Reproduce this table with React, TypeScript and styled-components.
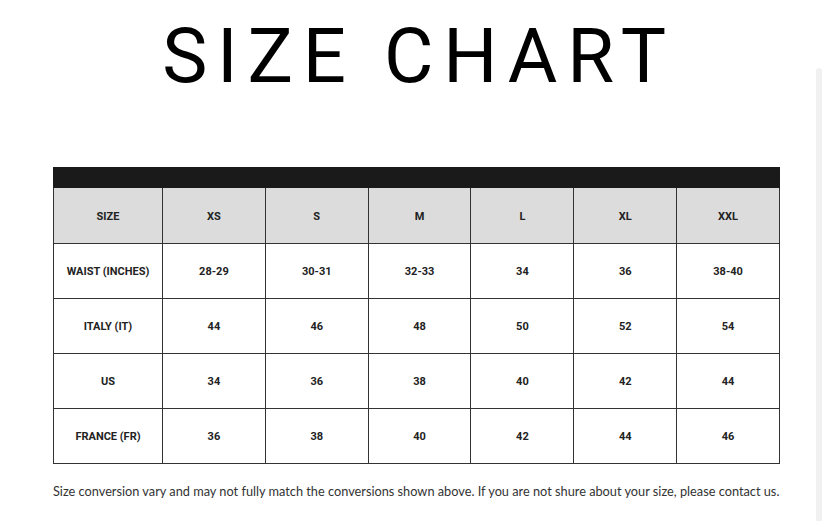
import * as React from "react";
import styled, { createGlobalStyle } from "styled-components";

const GlobalStyle = createGlobalStyle`
  html, body {
    margin: 0;
    padding: 0;
    background: #ffffff;
  }
`;

const Page = styled.div`
  position: relative;
  width: 828px;
  height: 521px;
  overflow: hidden;
  background: #ffffff;
`;

const ScrollStrip = styled.div`
  position: absolute;
  top: 68px;
  right: 6px;
  bottom: 0;
  width: 6px;
  background: #f1f1f1;
  border-radius: 3px 3px 0 0;
`;

const Content = styled.div`
  width: 727px;
  margin-left: 53px;
  display: flex;
  flex-direction: column;
`;

const Title = styled.h1`
  margin: 0;
  padding-top: 16px;
  padding-left: 5px;
  height: 167px;
  box-sizing: border-box;
  text-align: center;
  font-family: Roboto, "Liberation Sans", sans-serif;
  font-weight: 400;
  font-size: 76px;
  line-height: 80px;
  letter-spacing: 9.7px;
  color: #000000;
`;

const TopBar = styled.div`
  height: 21px;
  background: #1a1a1a;
`;

const Table = styled.table`
  border-collapse: collapse;
  width: 727px;
  table-layout: fixed;
`;

const Row = styled.tr<{ $head?: boolean }>`
  height: 55px;
  background: ${(p) => (p.$head ? "#dcdcdc" : "#ffffff")};
`;

const Cell = styled.td`
  border: 1.5px solid #333333;
  border-top: none;
  padding: 2px 0 0;
  text-align: center;
  vertical-align: middle;
  font-family: Roboto, "Liberation Sans", sans-serif;
  font-weight: 700;
  font-size: 11px;
  color: #222222;
`;

const Note = styled.p`
  margin: 19px 0 0;
  font-family: Lato, "Open Sans", sans-serif;
  font-size: 12.75px;
  color: #333333;
  white-space: nowrap;
`;

const sizes = ["SIZE", "XS", "S", "M", "L", "XL", "XXL"];
const rows = [
  ["WAIST (INCHES)", "28-29", "30-31", "32-33", "34", "36", "38-40"],
  ["ITALY (IT)", "44", "46", "48", "50", "52", "54"],
  ["US", "34", "36", "38", "40", "42", "44"],
  ["FRANCE (FR)", "36", "38", "40", "42", "44", "46"],
];

export default function App() {
  return (
    <Page>
      <GlobalStyle />
      <Content>
        <Title>SIZE CHART</Title>
        <TopBar />
        <Table>
          <colgroup>
            <col style={{ width: 109 }} />
            {sizes.slice(1).map((s) => (
              <col key={s} />
            ))}
          </colgroup>
          <tbody>
            <Row $head>
              {sizes.map((s) => (
                <Cell key={s}>{s}</Cell>
              ))}
            </Row>
            {rows.map((r) => (
              <Row key={r[0]}>
                {r.map((c, i) => (
                  <Cell key={i}>{c}</Cell>
                ))}
              </Row>
            ))}
          </tbody>
        </Table>
        <Note>
          Size conversion vary and may not fully match the conversions shown above. If you are not shure about your size, please contact us.
        </Note>
      </Content>
      <ScrollStrip />
    </Page>
  );
}
